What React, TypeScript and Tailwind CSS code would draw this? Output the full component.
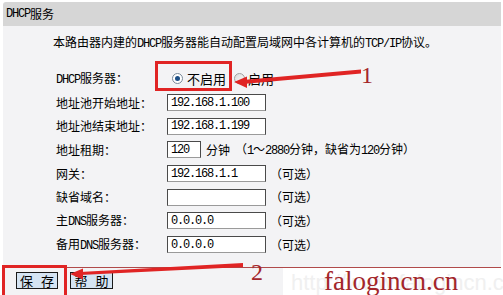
import React from "react";

const cjk = "font-['Noto_Sans_CJK_SC','Noto_Sans',sans-serif]";

function T({ s }: { s: string }) {
  const parts = s.match(/[\x20-\x7e]+|[^\x20-\x7e]+/g) || [];
  return (
    <>
      {parts.map((p, i) =>
        /^[\x20-\x7e]+$/.test(p) ? (
          <span
            key={i}
            className="font-['Liberation_Mono','DejaVu_Sans_Mono',monospace] text-[12px] tracking-[-1.2px] whitespace-pre"
          >
            {p}
          </span>
        ) : (
          <span key={i}>{p}</span>
        )
      )}
    </>
  );
}

function Field({ value, w = "w-[99px]" }: { value: string; w?: string }) {
  return (
    <div
      className={`${w} h-[17px] bg-white border border-[#4a4a4a] border-b-[#9a9a9a] flex items-center pl-[3px] text-black`}
    >
      <T s={value} />
    </div>
  );
}

function Row({ label, children }: { label: string; children: React.ReactNode }) {
  return (
    <div className="h-[23.7px] flex items-center">
      <div className="w-[111px] shrink-0">
        <T s={label} />
      </div>
      {children}
    </div>
  );
}

function Opt() {
  return <span className="ml-[4px]">（可选）</span>;
}

function Btn({ a, b, w }: { a: string; b: string; w: string }) {
  return (
    <div
      className={`${w} h-[17px] bg-[#d5e4f3] border border-[#1a1a1a] flex items-center justify-center gap-[8px] text-[13px] leading-[15px]`}
    >
      <span>{a}</span>
      <span>{b}</span>
    </div>
  );
}

export default function App() {
  return (
    <div
      className={`relative w-[503px] h-[295px] overflow-hidden bg-white pt-[2px] pl-[3px] pr-[2px] text-[12px] leading-[14px] text-black ${cjk}`}
    >
      <div className="h-[24px] bg-[#d6d6d6] rounded-tl-[3px] flex items-center pl-[3px]">
        <T s="DHCP服务" />
      </div>
      <div className="bg-[#f3f3f5] h-[241px] flex flex-col">
        <p className="pl-[50px] pt-[8px] leading-[16px]">
          <T s="本路由器内建的DHCP服务器能自动配置局域网中各计算机的TCP/IP协议。" />
        </p>
        <div className="mt-[15px] pl-[53px] flex flex-col">
          <Row label="DHCP服务器：">
            <div className="flex items-center pl-[5px]">
              <span className="w-[11px] h-[11px] rounded-full border border-[#7a8a9a] bg-white flex items-center justify-center">
                <span className="w-[5px] h-[5px] rounded-full bg-[#1d4f86]" />
              </span>
              <span className="ml-[4px] text-[13px]">不启用</span>
              <span className="ml-[8px] w-[11px] h-[11px] rounded-full border border-[#a0a0a0] bg-gradient-to-br from-[#d8d8d8] to-white" />
              <span className="ml-[3px] text-[13px]">启用</span>
            </div>
          </Row>
          <Row label="地址池开始地址：">
            <Field value="192.168.1.100" />
          </Row>
          <Row label="地址池结束地址：">
            <Field value="192.168.1.199" />
          </Row>
          <Row label="地址租期：">
            <Field value="120" w="w-[34px]" />
            <span className="ml-[5px]">分钟</span>
            <span className="ml-[5px]">
              <T s="（1～2880分钟，缺省为120分钟）" />
            </span>
          </Row>
          <Row label="网关：">
            <Field value="192.168.1.1" />
            <Opt />
          </Row>
          <Row label="缺省域名：">
            <Field value="" />
            <Opt />
          </Row>
          <Row label="主DNS服务器：">
            <Field value="0.0.0.0" />
            <Opt />
          </Row>
          <Row label="备用DNS服务器：">
            <Field value="0.0.0.0" />
            <Opt />
          </Row>
        </div>
      </div>
      <div className="h-[28px] bg-[#f3f3f5] border-t border-[#b04a4a] flex items-start pl-[13px] pt-[4px] gap-[12px]">
        <Btn a="保" b="存" w="w-[42px]" />
        <Btn a="帮" b="助" w="w-[43px]" />
      </div>

      {/* watermark */}
      <div className="absolute left-[283px] top-[268px] right-0 bottom-0 bg-white/95 overflow-hidden">
        <div className="absolute left-[8px] top-[2px] text-[22px] leading-[26px] text-[#f0f0f0] font-['Liberation_Sans',sans-serif] whitespace-nowrap">
          http://www.falogincn.com
        </div>
      </div>
      <div className="absolute left-[324px] top-[266px] text-[27px] leading-[30px] text-[#a3262a] font-['Liberation_Serif',serif] whitespace-nowrap">
        falogincn.cn
      </div>

      {/* annotations */}
      <div className="absolute left-[155px] top-[61px] w-[77px] h-[30px] border-[3px] border-[#e02424]" />
      <div className="absolute left-[2px] top-[265px] w-[65px] h-[34px] border-[3px] border-[#e02424]" />
      <div className="absolute left-[361px] top-[62px] text-[24px] leading-[26px] text-[#a3262a] font-['Liberation_Serif',serif]">
        1
      </div>
      <div className="absolute left-[251px] top-[259px] text-[24px] leading-[26px] text-[#a3262a] font-['Liberation_Serif',serif]">
        2
      </div>
      <svg className="absolute left-0 top-0 pointer-events-none" width="503" height="295">
        <polygon points="243,80 361,69.5 361,73.5 243,84" fill="#e02424" />
        <polygon points="234,82 247,76.5 247,88" fill="#e02424" />
        <polygon points="80,272 243,263 243,267 80,275" fill="#e02424" />
        <polygon points="70,274 83,268.5 83,279.5" fill="#e02424" />
      </svg>
    </div>
  );
}
